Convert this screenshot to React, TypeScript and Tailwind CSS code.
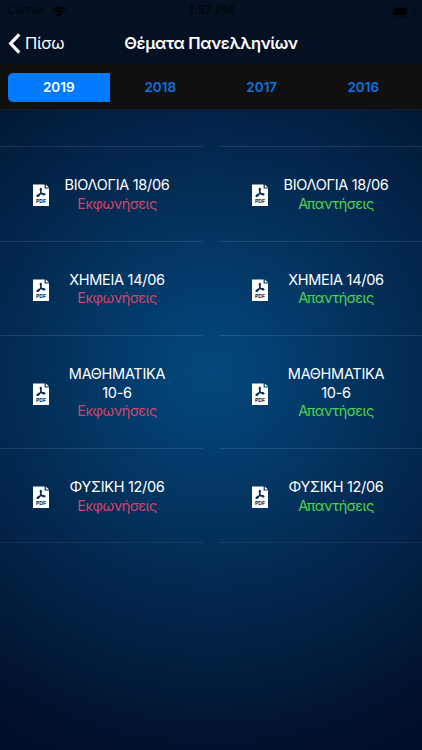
import { useState } from 'react'

const years = ['2019', '2018', '2017', '2016']

const exams = [
  { title: 'ΒΙΟΛΟΓΙΑ 18/06', height: 'h-[94.5px]' },
  { title: 'ΧΗΜΕΙΑ 14/06', height: 'h-[94.5px]' },
  { title: 'ΜΑΘΗΜΑΤΙΚΑ 10-6', height: 'h-[113px]' },
  { title: 'ΦΥΣΙΚΗ 12/06', height: 'h-[94px]' },
]

function PdfIcon() {
  return (
    <svg viewBox="0 0 16 22" className="mt-[3px] h-[22px] w-4 shrink-0">
      <path d="M0 .4h11.6v4.2H16V22H0z" fill="#fff" />
      <path d="M12.8.4 16 3.5h-3.2z" fill="#fff" />
      <path
        d="M7.7 4.3c.9 0 .5 2.4.1 3.8-.6 2-2.2 4.4-3.5 4.3-.9-.4.7-1.9 3.4-2.5 2.3-.5 4.3-.3 4.2.6-.2.9-2.4 0-3.5-1.6C7.6 7.7 6.900 4.400 7.700 4.300z"
        fill="none"
        stroke="#052c55"
        strokeWidth="1.3"
      />
      <text x="8" y="19.100" textAnchor="middle" fontSize="5.2" fontWeight="700" fill="#052c55">
        PDF
      </text>
    </svg>
  )
}

function StatusBar() {
  return (
    <div className="flex h-[22px] items-center justify-between pr-[6px] pl-[7px] text-[11.5px] text-black/70">
      <div className="flex flex-1 items-center gap-[5px]">
        <span className="tracking-[0.25px]">Carrier</span>
        <svg viewBox="0 0 16 12" className="h-[11px] w-[15px]" fill="none" stroke="#000" strokeWidth="2.2">
          <path d="M1 4.500a10 10 0 0 1 14 0" />
          <path d="M3.700 7.400a6 6 0 0 1 8.600 0" />
          <path d="M8 11.500 5.700 9.300a3.300 3.300 0 0 1 4.600 0z" fill="#000" stroke="none" />
        </svg>
      </div>
      <span className="font-semibold tracking-[0.3px]">1:57 PM</span>
      <div className="flex flex-1 items-center justify-end gap-px">
        <div className="h-[11px] w-[22px] rounded-[3px] border border-black/40 p-px">
          <div className="h-full w-[13px] rounded-[1px] bg-black" />
        </div>
        <div className="h-[4px] w-px bg-black/40" />
      </div>
    </div>
  )
}

function ExamColumn({ label, color }: { label: string; color: string }) {
  return (
    <div className="flex-1 border-t border-white/11">
      {exams.map((exam) => (
        <div key={exam.title} className={`flex items-center border-b border-white/11 pl-[33px] last:border-white/7 ${exam.height}`}>
          <PdfIcon />
          <div className="mt-[2px] ml-[10px] w-[116px] text-center text-[14.5px] leading-[18.6px]">
            <p className="tracking-[-0.3px] text-white">{exam.title}</p>
            <p className={`tracking-[-0.5px] ${color}`}>{label}</p>
          </div>
        </div>
      ))}
    </div>
  )
}

export default function App() {
  const [year, setYear] = useState('2019')

  return (
    <div className="flex h-[750px] w-[422px] flex-col overflow-hidden bg-[radial-gradient(circle_at_211px_372px,#03487c_0px,#033b6a_95px,#032c55_190px,#021f40_290px,#01112c_380px,#010f29_430px)] font-['Inter','Liberation_Sans',sans-serif]">
      <header className="h-16 shrink-0 bg-[#051023]">
        <StatusBar />
        <div className="flex h-[42px] items-center px-2 text-white">
          <button className="flex flex-1 items-center gap-1 text-[16.5px] tracking-[-0.3px]">
            <svg viewBox="0 0 13 22" className="h-[21px] w-[13px]" fill="none" stroke="#fff" strokeWidth="3.4">
              <path d="M11.500 1.500 2.500 11l9 9.500" />
            </svg>
            Πίσω
          </button>
          <h1 className="text-[16.5px] font-semibold tracking-[-0.35px]">Θέματα Πανελληνίων</h1>
          <div className="flex-1" />
        </div>
      </header>

      <div className="flex h-[46px] shrink-0 border-b border-[#151b22] bg-[#101010] px-2 pt-[9px] pb-[7px]">
        {years.map((item) => (
          <button
            key={item}
            onClick={() => setYear(item)}
            className={`flex-1 text-[13.5px] font-semibold first:rounded-l-[5px] last:rounded-r-[5px] ${
              item === year ? 'bg-[#007bff] text-white' : 'text-[#0a74e2]'
            }`}
          >
            {item}
          </button>
        ))}
      </div>

      <main className="flex gap-4 pt-9">
        <ExamColumn label="Εκφωνήσεις" color="text-[#d14468]" />
        <ExamColumn label="Απαντήσεις" color="text-[#4bd34f]" />
      </main>
    </div>
  )
}
